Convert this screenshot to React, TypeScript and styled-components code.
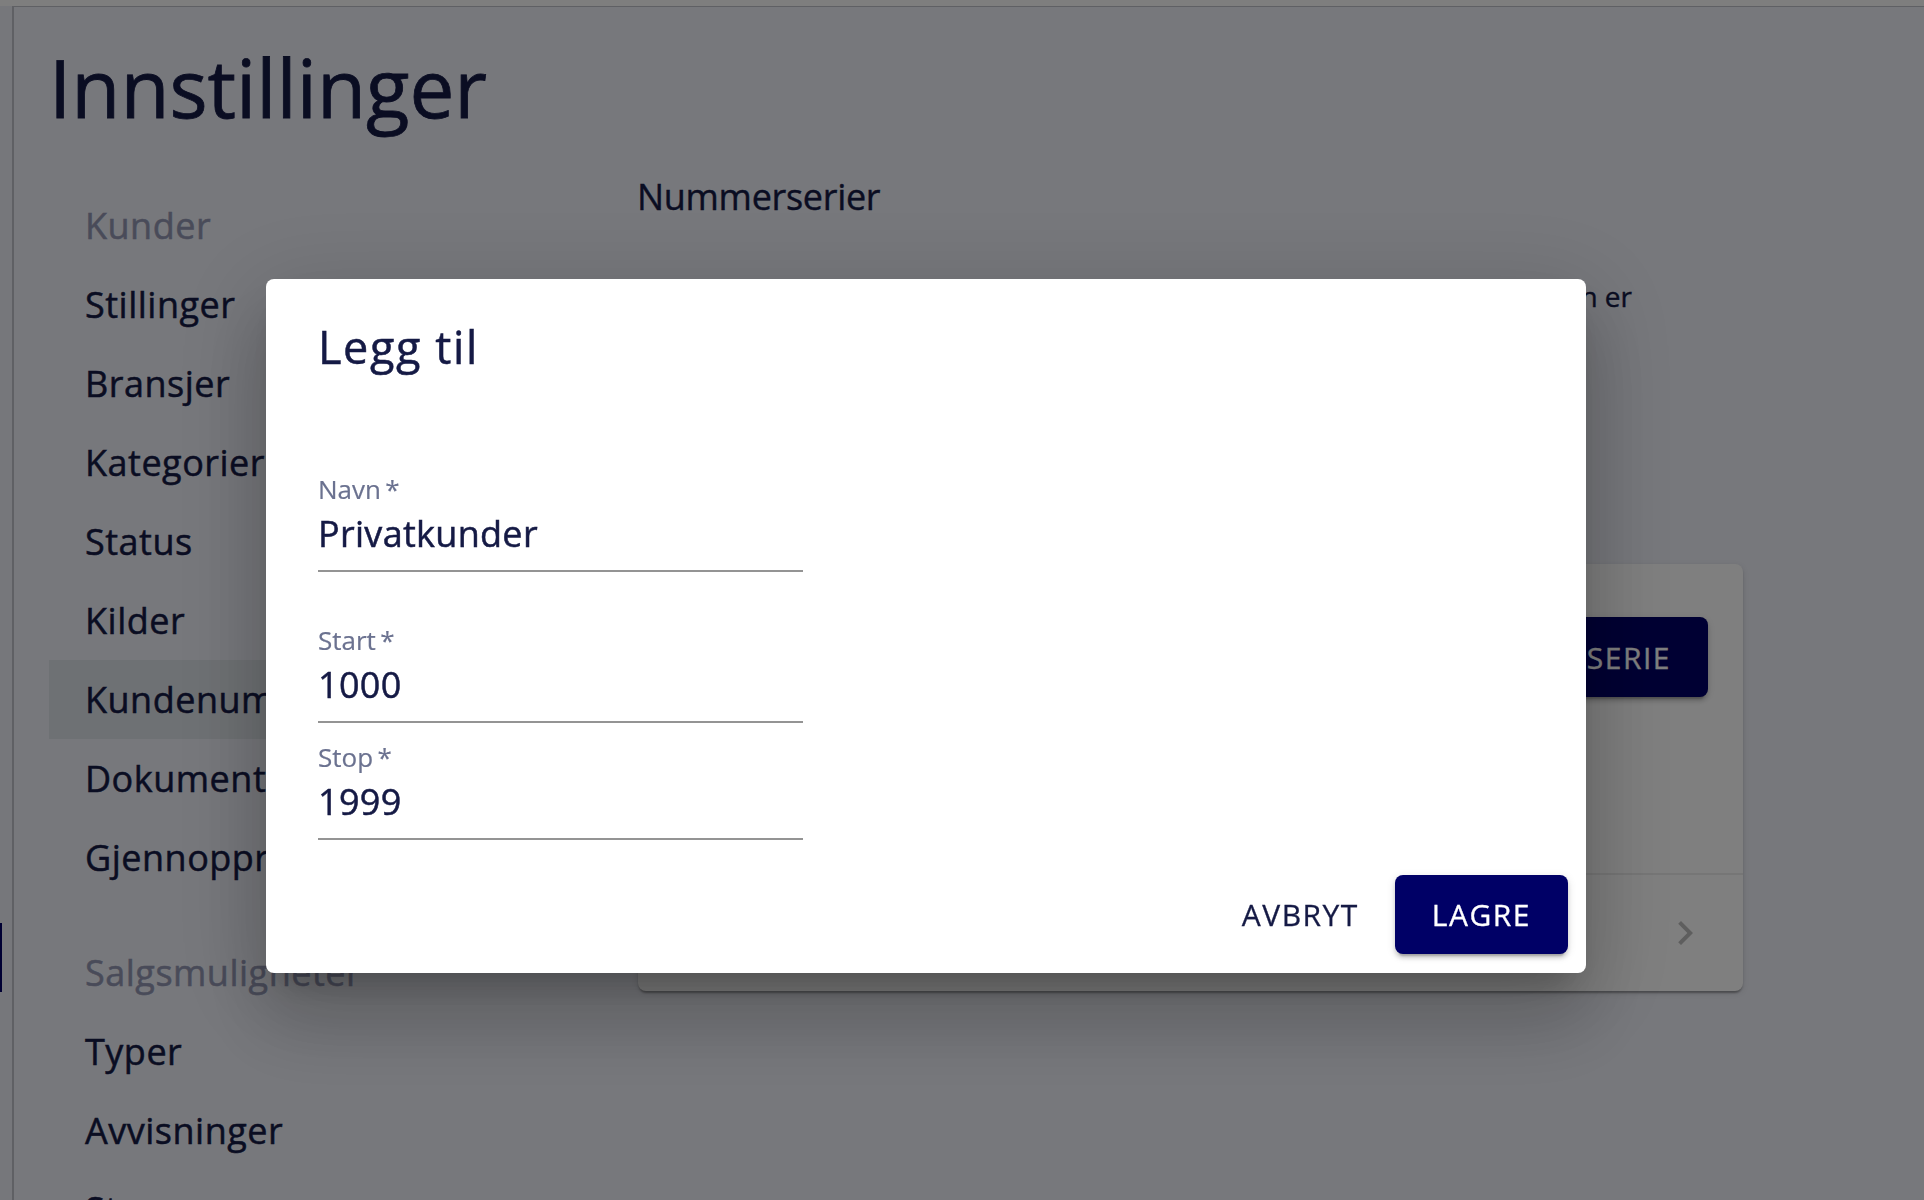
import React from "react";
import styled, { createGlobalStyle } from "styled-components";

const GlobalStyle = createGlobalStyle`
  html, body { margin: 0; padding: 0; height: 100%; overflow: hidden; }
  body { font-family: "Open Sans", "Noto Sans", sans-serif; color: #151a45; background: #fdfdfd; }
  * { box-sizing: border-box; }
`;

const Shell = styled.div`
  width: 1924px;
  height: 1200px;
  overflow: hidden;
  display: flex;
  flex-direction: column;
  background: #fdfdfd;
`;

const TopStrip = styled.div`
  height: 6px;
  flex-shrink: 0;
  background: #fdfdfd;
`;

const Body = styled.div`
  flex: 1;
  display: flex;
  min-height: 0;
`;

const NavEdge = styled.aside`
  width: 14px;
  flex-shrink: 0;
  background: #eceef6;
  border-right: 2px solid #bfc0c8;
  display: flex;
  flex-direction: column;
  padding-top: 917px;
`;

const NavIndicator = styled.div`
  width: 2px;
  height: 69px;
  background: #000066;
`;

const Main = styled.main`
  flex: 1;
  min-width: 0;
  background: #eef0f8;
  border-top: 1px solid #bfc0c8;
  padding: 33px 0 0 29px;
  display: flex;
  flex-direction: column;
`;

const PageTitle = styled.h1`
  margin: 0 0 0 6px;
  font-size: 80px;
  line-height: 94px;
  font-weight: 500;
  -webkit-text-stroke: 0.8px currentColor;
  color: #151a45;
`;

const Columns = styled.div`
  margin-top: 39px;
  display: flex;
  gap: 49px;
`;

const Sidebar = styled.nav`
  width: 539px;
  margin-left: 6px;
  padding-top: 13px;
  display: flex;
  flex-direction: column;
  gap: 36px;
`;

const NavGroup = styled.div`
  display: flex;
  flex-direction: column;
`;

const NavItem = styled.div<{ $active?: boolean; $header?: boolean }>`
  padding: 16px 33px 16px 36px;
  font-size: 36px;
  line-height: 47px;
  font-weight: 500;
  letter-spacing: 0.5px;
  -webkit-text-stroke: 0.5px currentColor;
  white-space: nowrap;
  color: ${(p) => (p.$header ? "#9397b3" : "#151a45")};
  background: ${(p) => (p.$active ? "#dde3e8" : "transparent")};
`;

const ContentColumn = styled.section`
  width: 1106px;
  display: flex;
  flex-direction: column;
`;

const SectionHeading = styled.h2`
  margin: 0;
  font-size: 36px;
  line-height: 48px;
  font-weight: 500;
  letter-spacing: -0.3px;
  -webkit-text-stroke: 0.4px currentColor;
  color: #151a45;
`;

const Description = styled.p`
  margin: 55px 0 0;
  width: 995px;
  font-size: 28px;
  line-height: 40px;
  font-weight: 500;
  -webkit-text-stroke: 0.4px currentColor;
  white-space: nowrap;
  text-align: right;
  color: #151a45;
`;

const Card = styled.div`
  margin-top: 248px;
  margin-left: 1px;
  width: 1105px;
  background: #ffffff;
  border-radius: 8px;
  box-shadow: 0 4px 2px -2px rgba(0, 0, 0, 0.2), 0 2px 2px 0 rgba(0, 0, 0, 0.14),
    0 2px 6px 0 rgba(0, 0, 0, 0.12);
  display: flex;
  flex-direction: column;
  overflow: hidden;
`;

const CardHeader = styled.div`
  height: 311px;
  padding: 53px 35px 0 40px;
  border-bottom: 2px solid #ececec;
  display: flex;
  justify-content: space-between;
  align-items: flex-start;
`;

const CardTitle = styled.div`
  font-size: 32px;
  line-height: 80px;
  font-weight: 500;
  color: #151a45;
`;

const CardRow = styled.div`
  height: 116px;
  padding: 0 34px 0 40px;
  display: flex;
  align-items: center;
  justify-content: space-between;
  font-size: 32px;
  color: #151a45;
`;

const Chevron = styled.svg`
  width: 48px;
  height: 48px;
  fill: #bdbdbd;
`;

const ContainedButton = styled.button<{ $h?: number }>`
  height: ${(p) => p.$h ?? 80}px;
  padding: 0 37px;
  border: none;
  border-radius: 8px;
  background: #000066;
  color: #ffffff;
  font-family: "Open Sans", "Noto Sans", sans-serif;
  font-size: 30px;
  font-weight: 500;
  letter-spacing: 1.5px;
  -webkit-text-stroke: 0.3px currentColor;
  text-transform: uppercase;
  box-shadow: 0 6px 2px -4px rgba(0, 0, 0, 0.2), 0 4px 4px 0 rgba(0, 0, 0, 0.14),
    0 2px 10px 0 rgba(0, 0, 0, 0.12);
  cursor: pointer;
`;

const TextButton = styled.button`
  height: 79px;
  padding: 0 20px;
  border: none;
  background: transparent;
  color: #151a45;
  font-family: "Open Sans", "Noto Sans", sans-serif;
  font-size: 30px;
  font-weight: 500;
  letter-spacing: 1.5px;
  -webkit-text-stroke: 0.3px currentColor;
  text-transform: uppercase;
  cursor: pointer;
`;

const Backdrop = styled.div`
  position: fixed;
  inset: 0;
  background: rgba(0, 0, 0, 0.5);
  display: flex;
  align-items: center;
  justify-content: center;
  padding: 52px 72px 0 0;
`;

const Dialog = styled.div`
  width: 1320px;
  background: #ffffff;
  border-radius: 8px;
  box-shadow: 0 22px 30px -14px rgba(0, 0, 0, 0.2), 0 48px 76px 6px rgba(0, 0, 0, 0.14),
    0 18px 92px 16px rgba(0, 0, 0, 0.12);
  display: flex;
  flex-direction: column;
`;

const DialogTitle = styled.h2`
  margin: 0;
  padding: 33px 52px 0;
  font-size: 45px;
  line-height: 70px;
  font-weight: 500;
  letter-spacing: 1.6px;
  -webkit-text-stroke: 0.5px currentColor;
  color: #151a45;
`;

const DialogContent = styled.div`
  padding: 89px 52px 0;
  display: flex;
  flex-direction: column;
`;

const Field = styled.label<{ $gap: number }>`
  width: 485px;
  margin-top: ${(p) => p.$gap}px;
  display: flex;
  flex-direction: column;
`;

const FieldLabel = styled.span`
  font-size: 26px;
  line-height: 36px;
  -webkit-text-stroke: 0.2px currentColor;
  color: #6b7290;
`;

const InputBox = styled.div`
  margin-top: 1px;
  padding-bottom: 10px;
  border-bottom: 2px solid #949494;
`;

const Input = styled.input`
  display: block;
  width: 100%;
  height: 52px;
  padding: 0;
  border: none;
  outline: none;
  background: transparent;
  font-family: "Open Sans", "Noto Sans", sans-serif;
  font-size: 36px;
  font-weight: 500;
  letter-spacing: 0.3px;
  -webkit-text-stroke: 0.5px #151a45;
  line-height: 52px;
  color: #151a45;
`;

const DialogActions = styled.div`
  padding: 35px 18px 19px;
  display: flex;
  justify-content: flex-end;
  align-items: center;
  gap: 16px;
`;

const customerItems = [
  "Stillinger",
  "Bransjer",
  "Kategorier",
  "Status",
  "Kilder",
  "Kundenummerserier",
  "Dokumentrettigheter",
  "Gjennopprett",
];

const salesItems = ["Typer", "Avvisninger", "Steg"];

const fields = [
  { label: "Navn", value: "Privatkunder", gap: 0 },
  { label: "Start", value: "1000", gap: 50 },
  { label: "Stop", value: "1999", gap: 16 },
];

export default function App() {
  return (
    <>
      <GlobalStyle />
      <Shell>
        <TopStrip />
        <Body>
          <NavEdge>
            <NavIndicator />
          </NavEdge>
          <Main>
            <PageTitle>Innstillinger</PageTitle>
            <Columns>
              <Sidebar>
                <NavGroup>
                  <NavItem $header>Kunder</NavItem>
                  {customerItems.map((item) => (
                    <NavItem key={item} $active={item === "Kundenummerserier"}>
                      {item}
                    </NavItem>
                  ))}
                </NavGroup>
                <NavGroup>
                  <NavItem $header>Salgsmuligheter</NavItem>
                  {salesItems.map((item) => (
                    <NavItem key={item}>{item}</NavItem>
                  ))}
                </NavGroup>
              </Sidebar>
              <ContentColumn>
                <SectionHeading>Nummerserier</SectionHeading>
                <Description>
                  Kundenummer hentes automatisk fra nummerserien. Når serien er
                </Description>
                <Card>
                  <CardHeader>
                    <CardTitle>Kundenummerserier</CardTitle>
                    <ContainedButton>Ny nummerserie</ContainedButton>
                  </CardHeader>
                  <CardRow>
                    <span>Standard 1 – 999</span>
                    <Chevron viewBox="0 0 24 24">
                      <path d="M10 6 8.59 7.41 13.17 12l-4.58 4.59L10 18l6-6z" />
                    </Chevron>
                  </CardRow>
                </Card>
              </ContentColumn>
            </Columns>
          </Main>
        </Body>
      </Shell>
      <Backdrop>
        <Dialog role="dialog">
          <DialogTitle>Legg til</DialogTitle>
          <DialogContent>
            {fields.map((f) => (
              <Field key={f.label} $gap={f.gap}>
                <FieldLabel>{f.label}&thinsp;*</FieldLabel>
                <InputBox>
                  <Input defaultValue={f.value} readOnly />
                </InputBox>
              </Field>
            ))}
          </DialogContent>
          <DialogActions>
            <TextButton>Avbryt</TextButton>
            <ContainedButton $h={79}>Lagre</ContainedButton>
          </DialogActions>
        </Dialog>
      </Backdrop>
    </>
  );
}
